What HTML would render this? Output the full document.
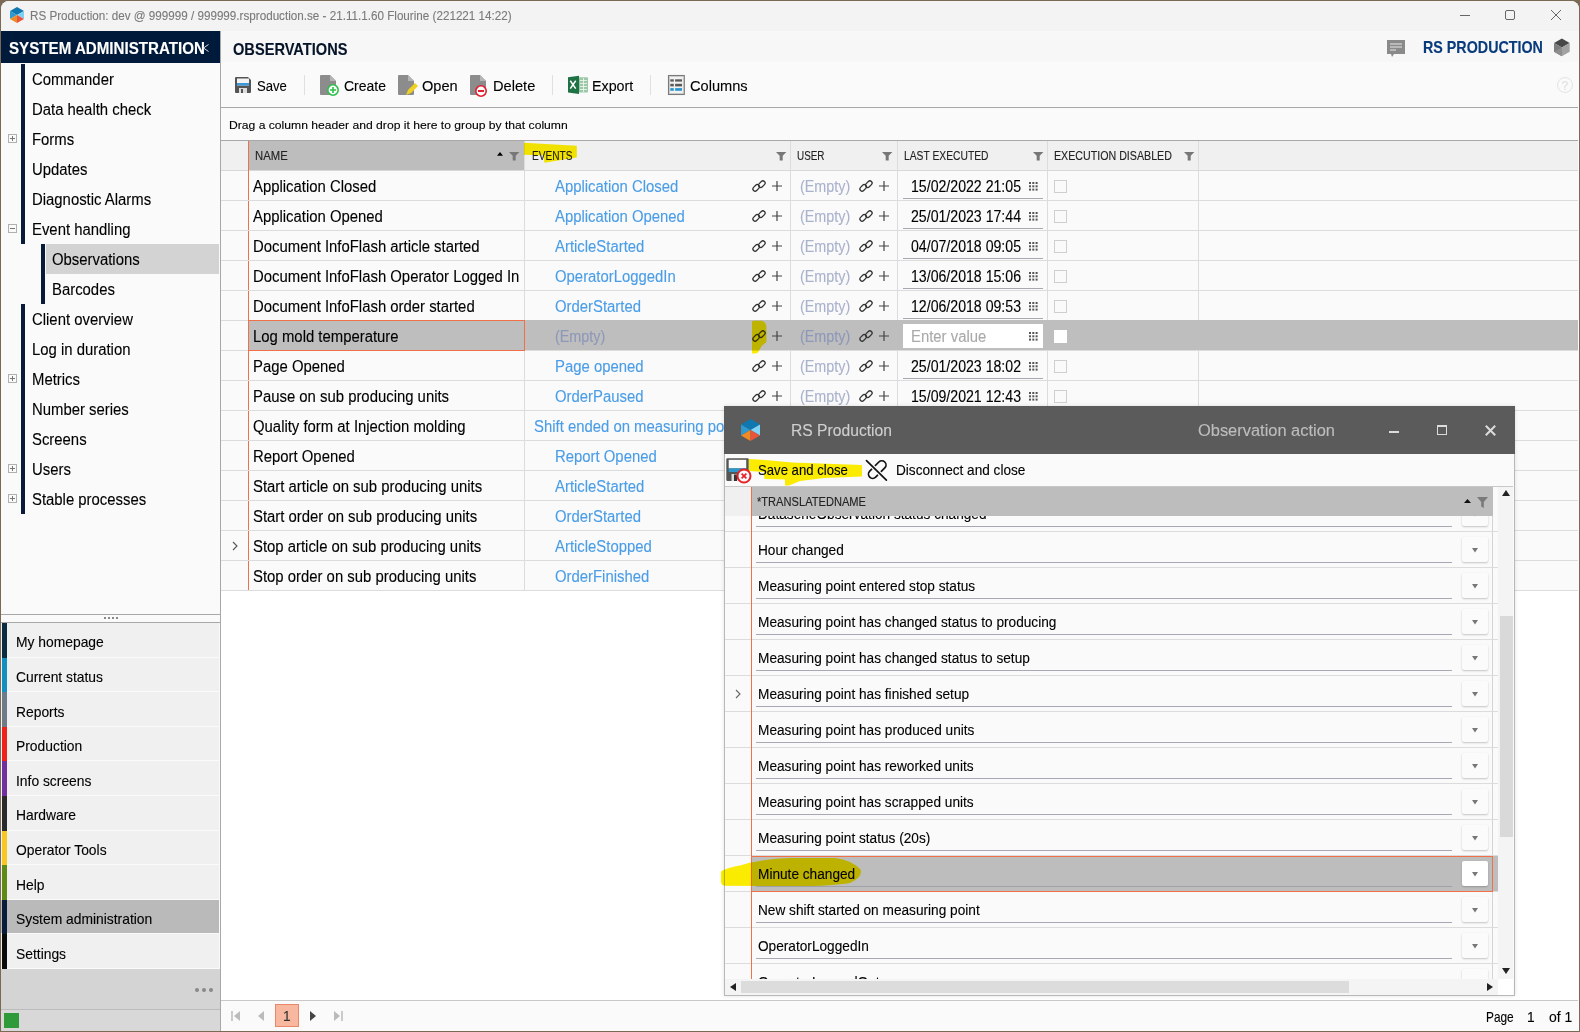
<!DOCTYPE html><html><head><meta charset="utf-8"><style>
*{margin:0;padding:0;box-sizing:border-box}
html,body{width:1580px;height:1032px;overflow:hidden;background:#7a6a55;font-family:"Liberation Sans",sans-serif;color:#111}
.a{position:absolute}
.t{position:absolute;white-space:nowrap;line-height:0;transform-origin:0 0;-webkit-text-stroke:0.12px currentColor}
svg{position:absolute;overflow:visible}
</style></head><body>

<div class="a" style="left:1px;top:1px;width:1578px;height:1030px;background:#fafafa;border-radius:8px 8px 0 0;overflow:hidden">
<div class="a" style="left:-1px;top:-1px;width:1580px;height:1032px">
<div class="a" style="left:0;top:0;width:1580px;height:31px;background:#f3f3f3"></div>
<svg style="left:10px;top:7px" width="14" height="16" viewBox="0 0 14 16">
<polygon points="7,0 14,4 7,8 0,4" fill="#0f78b0"/><polygon points="0,4 7,8 0,12" fill="#2e9ad0"/><polygon points="14,4 7,8 14,12" fill="#7fd0f5"/>
<polygon points="0,12 7,8 7,16" fill="#f08a25"/><polygon points="14,12 7,8 7,16" fill="#e8553a"/></svg>
<div class="t" style="left:30.40px;top:15.96px;font-size:12.8px;color:#7a7a7a;transform:scaleX(0.9113);">RS Production: dev @ 999999 / 999999.rsproduction.se - 21.11.1.60 Flourine (221221 14:22)</div>
<div class="a" style="left:1460px;top:15px;width:10px;height:1px;background:#666"></div>
<div class="a" style="left:1505px;top:10px;width:10px;height:10px;border:1px solid #666;border-radius:2px"></div>
<svg style="left:1551px;top:10px" width="10" height="10"><path d="M0 0L10 10M10 0L0 10" stroke="#666" stroke-width="1"/></svg>
<div class="a" style="left:1px;top:31px;width:220px;height:31.5px;background:#001a3b"></div>
<div class="t" style="left:8.50px;top:48.99px;font-size:15.6px;color:#fff;font-weight:bold;transform:scaleX(0.9706);">SYSTEM ADMINISTRATION</div>
<svg style="left:203px;top:44px" width="6" height="8" viewBox="0 0 6 8"><path d="M0.5 4L5.5 0.5M0.5 4L5.5 7.5" stroke="#ddd" stroke-width="1"/></svg>
<div class="a" style="left:220px;top:31px;width:1px;height:1001px;background:#a8a8a8"></div>
<div class="a" style="left:21px;top:64px;width:4px;height:180px;background:#0a1a3a"></div>
<div class="a" style="left:41px;top:244px;width:4px;height:60px;background:#0a1a3a"></div>
<div class="a" style="left:21px;top:304px;width:4px;height:210px;background:#0a1a3a"></div>
<div class="a" style="left:46px;top:244px;width:173px;height:30px;background:#d3d3d3"></div>
<div class="t" style="left:32.20px;top:79.96px;font-size:16px;color:#000;transform:scaleX(0.9300);">Commander</div>
<div class="t" style="left:32.20px;top:109.96px;font-size:16px;color:#000;transform:scaleX(0.9300);">Data health check</div>
<div class="t" style="left:32.20px;top:139.96px;font-size:16px;color:#000;transform:scaleX(0.9300);">Forms</div>
<div class="a" style="left:8px;top:134px;width:9px;height:9px;border:1px solid #b0b0b0;background:#fafafa"></div>
<div class="a" style="left:10px;top:138px;width:5px;height:1px;background:#777"></div>
<div class="a" style="left:12px;top:136px;width:1px;height:5px;background:#777"></div>
<div class="t" style="left:32.20px;top:169.96px;font-size:16px;color:#000;transform:scaleX(0.9300);">Updates</div>
<div class="t" style="left:32.20px;top:199.96px;font-size:16px;color:#000;transform:scaleX(0.9300);">Diagnostic Alarms</div>
<div class="t" style="left:32.20px;top:229.96px;font-size:16px;color:#000;transform:scaleX(0.9300);">Event handling</div>
<div class="a" style="left:8px;top:224px;width:9px;height:9px;border:1px solid #b0b0b0;background:#fafafa"></div>
<div class="a" style="left:10px;top:228px;width:5px;height:1px;background:#777"></div>
<div class="t" style="left:52.20px;top:259.96px;font-size:16px;color:#000;transform:scaleX(0.9300);">Observations</div>
<div class="t" style="left:52.20px;top:289.96px;font-size:16px;color:#000;transform:scaleX(0.9300);">Barcodes</div>
<div class="t" style="left:32.20px;top:319.96px;font-size:16px;color:#000;transform:scaleX(0.9300);">Client overview</div>
<div class="t" style="left:32.20px;top:349.96px;font-size:16px;color:#000;transform:scaleX(0.9300);">Log in duration</div>
<div class="t" style="left:32.20px;top:379.96px;font-size:16px;color:#000;transform:scaleX(0.9300);">Metrics</div>
<div class="a" style="left:8px;top:374px;width:9px;height:9px;border:1px solid #b0b0b0;background:#fafafa"></div>
<div class="a" style="left:10px;top:378px;width:5px;height:1px;background:#777"></div>
<div class="a" style="left:12px;top:376px;width:1px;height:5px;background:#777"></div>
<div class="t" style="left:32.20px;top:409.96px;font-size:16px;color:#000;transform:scaleX(0.9300);">Number series</div>
<div class="t" style="left:32.20px;top:439.96px;font-size:16px;color:#000;transform:scaleX(0.9300);">Screens</div>
<div class="t" style="left:32.20px;top:469.96px;font-size:16px;color:#000;transform:scaleX(0.9300);">Users</div>
<div class="a" style="left:8px;top:464px;width:9px;height:9px;border:1px solid #b0b0b0;background:#fafafa"></div>
<div class="a" style="left:10px;top:468px;width:5px;height:1px;background:#777"></div>
<div class="a" style="left:12px;top:466px;width:1px;height:5px;background:#777"></div>
<div class="t" style="left:32.20px;top:499.96px;font-size:16px;color:#000;transform:scaleX(0.9300);">Stable processes</div>
<div class="a" style="left:8px;top:494px;width:9px;height:9px;border:1px solid #b0b0b0;background:#fafafa"></div>
<div class="a" style="left:10px;top:498px;width:5px;height:1px;background:#777"></div>
<div class="a" style="left:12px;top:496px;width:1px;height:5px;background:#777"></div>
<div class="a" style="left:1px;top:614px;width:219px;height:1px;background:#a8a8a8"></div>
<div class="a" style="left:1px;top:622px;width:219px;height:1px;background:#a8a8a8"></div>
<div class="a" style="left:104px;top:617px;width:2px;height:2px;background:#888"></div>
<div class="a" style="left:108px;top:617px;width:2px;height:2px;background:#888"></div>
<div class="a" style="left:112px;top:617px;width:2px;height:2px;background:#888"></div>
<div class="a" style="left:116px;top:617px;width:2px;height:2px;background:#888"></div>
<div class="a" style="left:1px;top:623.0px;width:218px;height:34.6px;background:#f0f0f0;border-bottom:1px solid #fafafa"></div>
<div class="a" style="left:2px;top:623.0px;width:5px;height:34.6px;background:#0b2d40"></div>
<div class="t" style="left:16.30px;top:642.48px;font-size:14.5px;color:#000;transform:scaleX(0.9550);">My homepage</div>
<div class="a" style="left:1px;top:657.6px;width:218px;height:34.6px;background:#f0f0f0;border-bottom:1px solid #fafafa"></div>
<div class="a" style="left:2px;top:657.6px;width:5px;height:34.6px;background:#138ec0"></div>
<div class="t" style="left:16.30px;top:677.08px;font-size:14.5px;color:#000;transform:scaleX(0.9550);">Current status</div>
<div class="a" style="left:1px;top:692.2px;width:218px;height:34.6px;background:#f0f0f0;border-bottom:1px solid #fafafa"></div>
<div class="a" style="left:2px;top:692.2px;width:5px;height:34.6px;background:#6e7c8a"></div>
<div class="t" style="left:16.30px;top:711.68px;font-size:14.5px;color:#000;transform:scaleX(0.9550);">Reports</div>
<div class="a" style="left:1px;top:726.8px;width:218px;height:34.6px;background:#f0f0f0;border-bottom:1px solid #fafafa"></div>
<div class="a" style="left:2px;top:726.8px;width:5px;height:34.6px;background:#f0201a"></div>
<div class="t" style="left:16.30px;top:746.28px;font-size:14.5px;color:#000;transform:scaleX(0.9550);">Production</div>
<div class="a" style="left:1px;top:761.4px;width:218px;height:34.6px;background:#f0f0f0;border-bottom:1px solid #fafafa"></div>
<div class="a" style="left:2px;top:761.4px;width:5px;height:34.6px;background:#7030a0"></div>
<div class="t" style="left:16.30px;top:780.88px;font-size:14.5px;color:#000;transform:scaleX(0.9550);">Info screens</div>
<div class="a" style="left:1px;top:796.0px;width:218px;height:34.6px;background:#f0f0f0;border-bottom:1px solid #fafafa"></div>
<div class="a" style="left:2px;top:796.0px;width:5px;height:34.6px;background:#2a2a2a"></div>
<div class="t" style="left:16.30px;top:815.48px;font-size:14.5px;color:#000;transform:scaleX(0.9550);">Hardware</div>
<div class="a" style="left:1px;top:830.6px;width:218px;height:34.6px;background:#f0f0f0;border-bottom:1px solid #fafafa"></div>
<div class="a" style="left:2px;top:830.6px;width:5px;height:34.6px;background:#f8c820"></div>
<div class="t" style="left:16.30px;top:850.08px;font-size:14.5px;color:#000;transform:scaleX(0.9550);">Operator Tools</div>
<div class="a" style="left:1px;top:865.2px;width:218px;height:34.6px;background:#f0f0f0;border-bottom:1px solid #fafafa"></div>
<div class="a" style="left:2px;top:865.2px;width:5px;height:34.6px;background:#5f8a18"></div>
<div class="t" style="left:16.30px;top:884.68px;font-size:14.5px;color:#000;transform:scaleX(0.9550);">Help</div>
<div class="a" style="left:1px;top:899.8px;width:218px;height:34.6px;background:#bababa;border-bottom:1px solid #fafafa"></div>
<div class="a" style="left:2px;top:899.8px;width:5px;height:34.6px;background:#0a1a3a"></div>
<div class="t" style="left:16.30px;top:919.28px;font-size:14.5px;color:#000;transform:scaleX(0.9550);">System administration</div>
<div class="a" style="left:1px;top:934.4px;width:218px;height:34.6px;background:#f0f0f0;border-bottom:1px solid #fafafa"></div>
<div class="a" style="left:2px;top:934.4px;width:5px;height:34.6px;background:#0a0a0a"></div>
<div class="t" style="left:16.30px;top:953.88px;font-size:14.5px;color:#000;transform:scaleX(0.9550);">Settings</div>
<div class="a" style="left:1px;top:969px;width:219px;height:41px;background:#d4d4d4"></div>
<div class="a" style="left:195px;top:988px;width:4px;height:4px;border-radius:2px;background:#888"></div>
<div class="a" style="left:202px;top:988px;width:4px;height:4px;border-radius:2px;background:#888"></div>
<div class="a" style="left:209px;top:988px;width:4px;height:4px;border-radius:2px;background:#888"></div>
<div class="a" style="left:1px;top:1009px;width:219px;height:1px;background:#bbb"></div>
<div class="a" style="left:1px;top:1010px;width:219px;height:22px;background:#d8d8d8"></div>
<div class="a" style="left:4px;top:1013px;width:15px;height:15px;background:#2e9a3a"></div>
<div class="a" style="left:221px;top:31px;width:1357px;height:31px;background:#f7f7f7"></div>
<div class="t" style="left:232.50px;top:48.82px;font-size:16.1px;color:#061428;font-weight:bold;transform:scaleX(0.9077);">OBSERVATIONS</div>
<div class="t" style="left:1423.10px;top:47.99px;font-size:15.9px;color:#083a7c;font-weight:bold;transform:scaleX(0.8996);">RS PRODUCTION</div>
<svg style="left:1387px;top:40px" width="18" height="18" viewBox="0 0 18 18">
<path d="M0 0H18V14H7L5 17L4 14H0Z" fill="#8a8a8a"/><path d="M3 4H15M3 7H15M3 10H9" stroke="#e8e8e8" stroke-width="1.2"/></svg>
<svg style="left:1550px;top:35px" width="25" height="25" viewBox="1550 35 25 25">
<polygon points="1561.85,38.5 1569.7,42.95 1561.85,47.4 1554,42.95" fill="#484848"/><polygon points="1554,42.95 1561.85,47.4 1561.85,56.3 1554,51.85" fill="#7c7c7c"/><polygon points="1569.7,42.95 1561.85,47.4 1561.85,56.3 1569.7,51.85" fill="#a2a2a2"/>
<polygon points="1554,51.85 1561.85,47.4 1561.85,56.3" fill="#8e8e8e"/></svg>
<div class="a" style="left:1557px;top:77px;width:16px;height:16px;border:1px solid #e4e4e4;border-radius:50%"></div>
<div class="t" style="left:1561.50px;top:85.84px;font-size:12px;color:#e0e0e0;transform:scaleX(1.0000);">?</div>
<svg style="left:235px;top:77px" width="16" height="16" viewBox="0 0 16 16">
<path d="M1 0H13L16 3V15Q16 16 15 16H1Q0 16 0 15V1Q0 0 1 0Z" fill="#555"/><rect x="2" y="1.5" width="12" height="7" fill="#f4f4f4"/><rect x="2" y="6" width="12" height="2.5" fill="#3a9ad8"/><rect x="4" y="11" width="8" height="5" fill="#ddd"/><rect x="6" y="12" width="2" height="4" fill="#555"/></svg>
<div class="t" style="left:257.40px;top:85.96px;font-size:15.4px;color:#000;transform:scaleX(0.8518);">Save</div>
<div class="a" style="left:304px;top:75px;width:1px;height:20px;background:#e0e0e0"></div>
<svg style="left:320px;top:75px" width="17" height="20" viewBox="0 0 17 20"><path d="M1 0H10L16 6V19Q16 20 15 20H1Q0 20 0 19V1Q0 0 1 0Z" fill="#8c8c8c"/><path d="M10 0V6H16" fill="#b5b5b5"/></svg>
<svg style="left:327px;top:84px" width="12" height="12" viewBox="0 0 12 12"><circle cx="6" cy="6" r="5.2" fill="#fff" stroke="#2ec04a" stroke-width="1.6"/><path d="M6 3V9M3 6H9" stroke="#2ec04a" stroke-width="1.6"/></svg>
<div class="t" style="left:344.00px;top:85.96px;font-size:15.4px;color:#000;transform:scaleX(0.9086);">Create</div>
<svg style="left:398px;top:75px" width="17" height="20" viewBox="0 0 17 20"><path d="M1 0H10L16 6V19Q16 20 15 20H1Q0 20 0 19V1Q0 0 1 0Z" fill="#8c8c8c"/><path d="M10 0V6H16" fill="#b5b5b5"/></svg>
<svg style="left:405px;top:82px" width="14" height="13" viewBox="0 0 14 13"><path d="M1 13L3 8L10 1L13 4L6 11Z" fill="#f0d020"/></svg>
<div class="t" style="left:421.80px;top:85.96px;font-size:15.4px;color:#000;transform:scaleX(0.9476);">Open</div>
<svg style="left:470px;top:75px" width="17" height="20" viewBox="0 0 17 20"><path d="M1 0H10L16 6V19Q16 20 15 20H1Q0 20 0 19V1Q0 0 1 0Z" fill="#8c8c8c"/><path d="M10 0V6H16" fill="#b5b5b5"/></svg>
<svg style="left:475px;top:85px" width="12" height="12" viewBox="0 0 12 12"><circle cx="6" cy="6" r="5.2" fill="#fff" stroke="#e02030" stroke-width="1.6"/><path d="M3 6H9" stroke="#e02030" stroke-width="1.8"/></svg>
<div class="t" style="left:493.20px;top:85.96px;font-size:15.4px;color:#000;transform:scaleX(0.9502);">Delete</div>
<div class="a" style="left:552px;top:75px;width:1px;height:20px;background:#e0e0e0"></div>
<svg style="left:560px;top:70px" width="30" height="30" viewBox="560 70 30 30">
<rect x="578" y="77.3" width="10" height="15.2" rx="1" fill="#9cc8a8"/><path d="M580 80.5H587M580 83.5H587M580 86.5H587M580 89.5H587M583.5 78V92" stroke="#e9f4ec" stroke-width="0.9"/>
<path d="M568 77.3L579 75.8V93.9L568 92.4Z" fill="#1f7244"/><path d="M570.3 80.8L575.7 88.6M575.7 80.8L570.3 88.6" stroke="#fff" stroke-width="1.5"/></svg>
<div class="t" style="left:592.30px;top:85.96px;font-size:15.4px;color:#000;transform:scaleX(0.9279);">Export</div>
<div class="a" style="left:650px;top:75px;width:1px;height:20px;background:#e0e0e0"></div>
<svg style="left:660px;top:70px" width="30" height="30" viewBox="660 70 30 30">
<rect x="668.6" y="75.6" width="15.6" height="18.8" fill="#f2f2f2" stroke="#7a7a7a" stroke-width="1.3"/><rect x="669.6" y="76.6" width="13.6" height="16.8" fill="none" stroke="#c8c8c8" stroke-width="0.7"/>
<rect x="670.3" y="79.3" width="3.5" height="2.3" fill="#5a5a5a"/><rect x="675.1" y="79.3" width="6.9" height="2.3" fill="#5a5a5a"/>
<rect x="670.3" y="83.8" width="3.5" height="2.6" fill="#5a5a5a"/><rect x="675.1" y="83.8" width="6.9" height="2.6" fill="#5a5a5a"/>
<rect x="670.3" y="88.1" width="3.5" height="2.7" fill="#2a96d0"/><rect x="675.1" y="88.1" width="6.9" height="2.7" fill="#2a96d0"/></svg>
<div class="t" style="left:690.20px;top:85.96px;font-size:15.4px;color:#000;transform:scaleX(0.9495);">Columns</div>
<div class="a" style="left:221px;top:107px;width:1357px;height:1px;background:#a8a8a8"></div>
<div class="t" style="left:228.50px;top:125.01px;font-size:11.8px;color:#000;transform:scaleX(1.0289);">Drag a column header and drop it here to group by that column</div>
<div class="a" style="left:221px;top:140px;width:1357px;height:1px;background:#a8a8a8"></div>
<div class="a" style="left:221px;top:141px;width:1357px;height:29px;background:#f0f0f0"></div>
<div class="a" style="left:249px;top:141px;width:275px;height:29px;background:#bdbdbd"></div>
<div class="a" style="left:221px;top:170px;width:1357px;height:1px;background:#d8d8d8"></div>
<div class="a" style="left:524px;top:141px;width:1px;height:450px;background:#dcdcdc"></div>
<div class="a" style="left:790px;top:141px;width:1px;height:450px;background:#dcdcdc"></div>
<div class="a" style="left:897px;top:141px;width:1px;height:450px;background:#dcdcdc"></div>
<div class="a" style="left:1047px;top:141px;width:1px;height:450px;background:#dcdcdc"></div>
<div class="a" style="left:1198px;top:141px;width:1px;height:450px;background:#dcdcdc"></div>
<div class="a" style="left:248px;top:141px;width:1px;height:450px;background:#f07048"></div>
<div class="t" style="left:254.60px;top:156.23px;font-size:12.9px;color:#222;transform:scaleX(0.8773);">NAME</div>
<div class="t" style="left:531.60px;top:156.23px;font-size:12.9px;color:#222;transform:scaleX(0.7847);">EVENTS</div>
<div class="t" style="left:797.30px;top:156.23px;font-size:12.9px;color:#222;transform:scaleX(0.7673);">USER</div>
<div class="t" style="left:904.40px;top:156.23px;font-size:12.9px;color:#222;transform:scaleX(0.7991);">LAST EXECUTED</div>
<div class="t" style="left:1054.00px;top:156.23px;font-size:12.9px;color:#222;transform:scaleX(0.8272);">EXECUTION DISABLED</div>
<svg style="left:509.3px;top:152.2px" width="11" height="9" viewBox="0 0 11 9"><path d="M0 0H10.4L6.7 3.8V8.5H3.7V3.8Z" fill="#777"/></svg>
<svg style="left:775.5px;top:152.2px" width="11" height="9" viewBox="0 0 11 9"><path d="M0 0H10.4L6.7 3.8V8.5H3.7V3.8Z" fill="#777"/></svg>
<svg style="left:882.4px;top:152.2px" width="11" height="9" viewBox="0 0 11 9"><path d="M0 0H10.4L6.7 3.8V8.5H3.7V3.8Z" fill="#777"/></svg>
<svg style="left:1032.5px;top:152.2px" width="11" height="9" viewBox="0 0 11 9"><path d="M0 0H10.4L6.7 3.8V8.5H3.7V3.8Z" fill="#777"/></svg>
<svg style="left:1183.5px;top:152.2px" width="11" height="9" viewBox="0 0 11 9"><path d="M0 0H10.4L6.7 3.8V8.5H3.7V3.8Z" fill="#777"/></svg>
<svg style="left:497px;top:152.2px" width="6" height="4" viewBox="0 0 6 4"><path d="M0 3.8L3 0L6 3.8Z" fill="#000"/></svg>
<div class="a" style="left:221px;top:591px;width:1357px;height:409px;background:#fff"></div>
<div class="a" style="left:221px;top:200px;width:1357px;height:1px;background:#dcdcdc"></div>
<div class="t" style="left:253.30px;top:186.96px;font-size:16px;color:#000;transform:scaleX(0.9300);">Application Closed</div>
<div class="t" style="left:555.00px;top:186.96px;font-size:16px;color:#4a9de6;transform:scaleX(0.9300);">Application Closed</div>
<svg style="left:750.3px;top:177.0px" width="18" height="18" viewBox="-9 -9 18 18"><g transform="rotate(-45)" fill="none" stroke="#333" stroke-width="1.25"><rect x="-7.0" y="-2.9" width="7.4" height="4.4" rx="2.2"/><rect x="-0.4" y="-1.5" width="7.4" height="4.4" rx="2.2"/></g></svg>
<svg style="left:772px;top:181px" width="10" height="10" viewBox="0 0 10 10"><path d="M5 0V10M0 5H10" stroke="#444" stroke-width="1.2"/></svg>
<div class="t" style="left:800.30px;top:186.96px;font-size:16px;color:#aab2cc;transform:scaleX(0.8960);">(Empty)</div>
<svg style="left:857.3px;top:177.0px" width="18" height="18" viewBox="-9 -9 18 18"><g transform="rotate(-45)" fill="none" stroke="#333" stroke-width="1.25"><rect x="-7.0" y="-2.9" width="7.4" height="4.4" rx="2.2"/><rect x="-0.4" y="-1.5" width="7.4" height="4.4" rx="2.2"/></g></svg>
<svg style="left:879px;top:181px" width="10" height="10" viewBox="0 0 10 10"><path d="M5 0V10M0 5H10" stroke="#444" stroke-width="1.2"/></svg>
<div class="t" style="left:911.00px;top:186.96px;font-size:16px;color:#000;transform:scaleX(0.8830);">15/02/2022 21:05</div>
<div class="a" style="left:903px;top:198px;width:140px;height:1px;background:#a8a8b0"></div>
<div class="a" style="left:1054px;top:180px;width:13px;height:13px;border:1px solid #cfcfcf;background:#fafafa"></div>
<svg style="left:1029px;top:181.5px" width="9" height="9" viewBox="0 0 9 9"><g fill="#555"><rect x="0.0" y="0.0" width="2" height="2"/><rect x="3.3" y="0.0" width="2" height="2"/><rect x="6.6" y="0.0" width="2" height="2"/><rect x="0.0" y="3.3" width="2" height="2"/><rect x="3.3" y="3.3" width="2" height="2"/><rect x="6.6" y="3.3" width="2" height="2"/><rect x="0.0" y="6.6" width="2" height="2"/><rect x="3.3" y="6.6" width="2" height="2"/><rect x="6.6" y="6.6" width="2" height="2"/></g></svg>
<div class="a" style="left:221px;top:230px;width:1357px;height:1px;background:#dcdcdc"></div>
<div class="t" style="left:253.30px;top:216.96px;font-size:16px;color:#000;transform:scaleX(0.9300);">Application Opened</div>
<div class="t" style="left:555.00px;top:216.96px;font-size:16px;color:#4a9de6;transform:scaleX(0.9300);">Application Opened</div>
<svg style="left:750.3px;top:207.0px" width="18" height="18" viewBox="-9 -9 18 18"><g transform="rotate(-45)" fill="none" stroke="#333" stroke-width="1.25"><rect x="-7.0" y="-2.9" width="7.4" height="4.4" rx="2.2"/><rect x="-0.4" y="-1.5" width="7.4" height="4.4" rx="2.2"/></g></svg>
<svg style="left:772px;top:211px" width="10" height="10" viewBox="0 0 10 10"><path d="M5 0V10M0 5H10" stroke="#444" stroke-width="1.2"/></svg>
<div class="t" style="left:800.30px;top:216.96px;font-size:16px;color:#aab2cc;transform:scaleX(0.8960);">(Empty)</div>
<svg style="left:857.3px;top:207.0px" width="18" height="18" viewBox="-9 -9 18 18"><g transform="rotate(-45)" fill="none" stroke="#333" stroke-width="1.25"><rect x="-7.0" y="-2.9" width="7.4" height="4.4" rx="2.2"/><rect x="-0.4" y="-1.5" width="7.4" height="4.4" rx="2.2"/></g></svg>
<svg style="left:879px;top:211px" width="10" height="10" viewBox="0 0 10 10"><path d="M5 0V10M0 5H10" stroke="#444" stroke-width="1.2"/></svg>
<div class="t" style="left:911.00px;top:216.96px;font-size:16px;color:#000;transform:scaleX(0.8830);">25/01/2023 17:44</div>
<div class="a" style="left:903px;top:228px;width:140px;height:1px;background:#a8a8b0"></div>
<div class="a" style="left:1054px;top:210px;width:13px;height:13px;border:1px solid #cfcfcf;background:#fafafa"></div>
<svg style="left:1029px;top:211.5px" width="9" height="9" viewBox="0 0 9 9"><g fill="#555"><rect x="0.0" y="0.0" width="2" height="2"/><rect x="3.3" y="0.0" width="2" height="2"/><rect x="6.6" y="0.0" width="2" height="2"/><rect x="0.0" y="3.3" width="2" height="2"/><rect x="3.3" y="3.3" width="2" height="2"/><rect x="6.6" y="3.3" width="2" height="2"/><rect x="0.0" y="6.6" width="2" height="2"/><rect x="3.3" y="6.6" width="2" height="2"/><rect x="6.6" y="6.6" width="2" height="2"/></g></svg>
<div class="a" style="left:221px;top:260px;width:1357px;height:1px;background:#dcdcdc"></div>
<div class="t" style="left:253.30px;top:246.96px;font-size:16px;color:#000;transform:scaleX(0.9300);">Document InfoFlash article started</div>
<div class="t" style="left:555.00px;top:246.96px;font-size:16px;color:#4a9de6;transform:scaleX(0.9300);">ArticleStarted</div>
<svg style="left:750.3px;top:237.0px" width="18" height="18" viewBox="-9 -9 18 18"><g transform="rotate(-45)" fill="none" stroke="#333" stroke-width="1.25"><rect x="-7.0" y="-2.9" width="7.4" height="4.4" rx="2.2"/><rect x="-0.4" y="-1.5" width="7.4" height="4.4" rx="2.2"/></g></svg>
<svg style="left:772px;top:241px" width="10" height="10" viewBox="0 0 10 10"><path d="M5 0V10M0 5H10" stroke="#444" stroke-width="1.2"/></svg>
<div class="t" style="left:800.30px;top:246.96px;font-size:16px;color:#aab2cc;transform:scaleX(0.8960);">(Empty)</div>
<svg style="left:857.3px;top:237.0px" width="18" height="18" viewBox="-9 -9 18 18"><g transform="rotate(-45)" fill="none" stroke="#333" stroke-width="1.25"><rect x="-7.0" y="-2.9" width="7.4" height="4.4" rx="2.2"/><rect x="-0.4" y="-1.5" width="7.4" height="4.4" rx="2.2"/></g></svg>
<svg style="left:879px;top:241px" width="10" height="10" viewBox="0 0 10 10"><path d="M5 0V10M0 5H10" stroke="#444" stroke-width="1.2"/></svg>
<div class="t" style="left:911.00px;top:246.96px;font-size:16px;color:#000;transform:scaleX(0.8830);">04/07/2018 09:05</div>
<div class="a" style="left:903px;top:258px;width:140px;height:1px;background:#a8a8b0"></div>
<div class="a" style="left:1054px;top:240px;width:13px;height:13px;border:1px solid #cfcfcf;background:#fafafa"></div>
<svg style="left:1029px;top:241.5px" width="9" height="9" viewBox="0 0 9 9"><g fill="#555"><rect x="0.0" y="0.0" width="2" height="2"/><rect x="3.3" y="0.0" width="2" height="2"/><rect x="6.6" y="0.0" width="2" height="2"/><rect x="0.0" y="3.3" width="2" height="2"/><rect x="3.3" y="3.3" width="2" height="2"/><rect x="6.6" y="3.3" width="2" height="2"/><rect x="0.0" y="6.6" width="2" height="2"/><rect x="3.3" y="6.6" width="2" height="2"/><rect x="6.6" y="6.6" width="2" height="2"/></g></svg>
<div class="a" style="left:221px;top:290px;width:1357px;height:1px;background:#dcdcdc"></div>
<div class="t" style="left:253.30px;top:276.96px;font-size:16px;color:#000;transform:scaleX(0.9300);">Document InfoFlash Operator Logged In</div>
<div class="t" style="left:555.00px;top:276.96px;font-size:16px;color:#4a9de6;transform:scaleX(0.9300);">OperatorLoggedIn</div>
<svg style="left:750.3px;top:267.0px" width="18" height="18" viewBox="-9 -9 18 18"><g transform="rotate(-45)" fill="none" stroke="#333" stroke-width="1.25"><rect x="-7.0" y="-2.9" width="7.4" height="4.4" rx="2.2"/><rect x="-0.4" y="-1.5" width="7.4" height="4.4" rx="2.2"/></g></svg>
<svg style="left:772px;top:271px" width="10" height="10" viewBox="0 0 10 10"><path d="M5 0V10M0 5H10" stroke="#444" stroke-width="1.2"/></svg>
<div class="t" style="left:800.30px;top:276.96px;font-size:16px;color:#aab2cc;transform:scaleX(0.8960);">(Empty)</div>
<svg style="left:857.3px;top:267.0px" width="18" height="18" viewBox="-9 -9 18 18"><g transform="rotate(-45)" fill="none" stroke="#333" stroke-width="1.25"><rect x="-7.0" y="-2.9" width="7.4" height="4.4" rx="2.2"/><rect x="-0.4" y="-1.5" width="7.4" height="4.4" rx="2.2"/></g></svg>
<svg style="left:879px;top:271px" width="10" height="10" viewBox="0 0 10 10"><path d="M5 0V10M0 5H10" stroke="#444" stroke-width="1.2"/></svg>
<div class="t" style="left:911.00px;top:276.96px;font-size:16px;color:#000;transform:scaleX(0.8830);">13/06/2018 15:06</div>
<div class="a" style="left:903px;top:288px;width:140px;height:1px;background:#a8a8b0"></div>
<div class="a" style="left:1054px;top:270px;width:13px;height:13px;border:1px solid #cfcfcf;background:#fafafa"></div>
<svg style="left:1029px;top:271.5px" width="9" height="9" viewBox="0 0 9 9"><g fill="#555"><rect x="0.0" y="0.0" width="2" height="2"/><rect x="3.3" y="0.0" width="2" height="2"/><rect x="6.6" y="0.0" width="2" height="2"/><rect x="0.0" y="3.3" width="2" height="2"/><rect x="3.3" y="3.3" width="2" height="2"/><rect x="6.6" y="3.3" width="2" height="2"/><rect x="0.0" y="6.6" width="2" height="2"/><rect x="3.3" y="6.6" width="2" height="2"/><rect x="6.6" y="6.6" width="2" height="2"/></g></svg>
<div class="a" style="left:221px;top:320px;width:1357px;height:1px;background:#dcdcdc"></div>
<div class="t" style="left:253.30px;top:306.96px;font-size:16px;color:#000;transform:scaleX(0.9300);">Document InfoFlash order started</div>
<div class="t" style="left:555.00px;top:306.96px;font-size:16px;color:#4a9de6;transform:scaleX(0.9300);">OrderStarted</div>
<svg style="left:750.3px;top:297.0px" width="18" height="18" viewBox="-9 -9 18 18"><g transform="rotate(-45)" fill="none" stroke="#333" stroke-width="1.25"><rect x="-7.0" y="-2.9" width="7.4" height="4.4" rx="2.2"/><rect x="-0.4" y="-1.5" width="7.4" height="4.4" rx="2.2"/></g></svg>
<svg style="left:772px;top:301px" width="10" height="10" viewBox="0 0 10 10"><path d="M5 0V10M0 5H10" stroke="#444" stroke-width="1.2"/></svg>
<div class="t" style="left:800.30px;top:306.96px;font-size:16px;color:#aab2cc;transform:scaleX(0.8960);">(Empty)</div>
<svg style="left:857.3px;top:297.0px" width="18" height="18" viewBox="-9 -9 18 18"><g transform="rotate(-45)" fill="none" stroke="#333" stroke-width="1.25"><rect x="-7.0" y="-2.9" width="7.4" height="4.4" rx="2.2"/><rect x="-0.4" y="-1.5" width="7.4" height="4.4" rx="2.2"/></g></svg>
<svg style="left:879px;top:301px" width="10" height="10" viewBox="0 0 10 10"><path d="M5 0V10M0 5H10" stroke="#444" stroke-width="1.2"/></svg>
<div class="t" style="left:911.00px;top:306.96px;font-size:16px;color:#000;transform:scaleX(0.8830);">12/06/2018 09:53</div>
<div class="a" style="left:903px;top:318px;width:140px;height:1px;background:#a8a8b0"></div>
<div class="a" style="left:1054px;top:300px;width:13px;height:13px;border:1px solid #cfcfcf;background:#fafafa"></div>
<svg style="left:1029px;top:301.5px" width="9" height="9" viewBox="0 0 9 9"><g fill="#555"><rect x="0.0" y="0.0" width="2" height="2"/><rect x="3.3" y="0.0" width="2" height="2"/><rect x="6.6" y="0.0" width="2" height="2"/><rect x="0.0" y="3.3" width="2" height="2"/><rect x="3.3" y="3.3" width="2" height="2"/><rect x="6.6" y="3.3" width="2" height="2"/><rect x="0.0" y="6.6" width="2" height="2"/><rect x="3.3" y="6.6" width="2" height="2"/><rect x="6.6" y="6.6" width="2" height="2"/></g></svg>
<div class="a" style="left:249px;top:320px;width:1329px;height:30px;background:#bebebe"></div>
<div class="a" style="left:221px;top:350px;width:1357px;height:1px;background:#dcdcdc"></div>
<div class="t" style="left:253.30px;top:336.96px;font-size:16px;color:#000;transform:scaleX(0.9300);">Log mold temperature</div>
<div class="t" style="left:555.00px;top:336.96px;font-size:16px;color:#8e98b8;transform:scaleX(0.8960);">(Empty)</div>
<svg style="left:750.3px;top:327.0px" width="18" height="18" viewBox="-9 -9 18 18"><g transform="rotate(-45)" fill="none" stroke="#333" stroke-width="1.25"><rect x="-7.0" y="-2.9" width="7.4" height="4.4" rx="2.2"/><rect x="-0.4" y="-1.5" width="7.4" height="4.4" rx="2.2"/></g></svg>
<svg style="left:772px;top:331px" width="10" height="10" viewBox="0 0 10 10"><path d="M5 0V10M0 5H10" stroke="#444" stroke-width="1.2"/></svg>
<div class="t" style="left:800.30px;top:336.96px;font-size:16px;color:#8e98b8;transform:scaleX(0.8960);">(Empty)</div>
<svg style="left:857.3px;top:327.0px" width="18" height="18" viewBox="-9 -9 18 18"><g transform="rotate(-45)" fill="none" stroke="#333" stroke-width="1.25"><rect x="-7.0" y="-2.9" width="7.4" height="4.4" rx="2.2"/><rect x="-0.4" y="-1.5" width="7.4" height="4.4" rx="2.2"/></g></svg>
<svg style="left:879px;top:331px" width="10" height="10" viewBox="0 0 10 10"><path d="M5 0V10M0 5H10" stroke="#444" stroke-width="1.2"/></svg>
<div class="a" style="left:903px;top:324px;width:140px;height:24px;background:#fff"></div>
<div class="t" style="left:911.00px;top:336.96px;font-size:16px;color:#aaa;transform:scaleX(0.9300);">Enter value</div>
<div class="a" style="left:1054px;top:330px;width:13px;height:13px;background:#fff"></div>
<svg style="left:1029px;top:331.5px" width="9" height="9" viewBox="0 0 9 9"><g fill="#555"><rect x="0.0" y="0.0" width="2" height="2"/><rect x="3.3" y="0.0" width="2" height="2"/><rect x="6.6" y="0.0" width="2" height="2"/><rect x="0.0" y="3.3" width="2" height="2"/><rect x="3.3" y="3.3" width="2" height="2"/><rect x="6.6" y="3.3" width="2" height="2"/><rect x="0.0" y="6.6" width="2" height="2"/><rect x="3.3" y="6.6" width="2" height="2"/><rect x="6.6" y="6.6" width="2" height="2"/></g></svg>
<div class="a" style="left:221px;top:380px;width:1357px;height:1px;background:#dcdcdc"></div>
<div class="t" style="left:253.30px;top:366.96px;font-size:16px;color:#000;transform:scaleX(0.9300);">Page Opened</div>
<div class="t" style="left:555.00px;top:366.96px;font-size:16px;color:#4a9de6;transform:scaleX(0.9300);">Page opened</div>
<svg style="left:750.3px;top:357.0px" width="18" height="18" viewBox="-9 -9 18 18"><g transform="rotate(-45)" fill="none" stroke="#333" stroke-width="1.25"><rect x="-7.0" y="-2.9" width="7.4" height="4.4" rx="2.2"/><rect x="-0.4" y="-1.5" width="7.4" height="4.4" rx="2.2"/></g></svg>
<svg style="left:772px;top:361px" width="10" height="10" viewBox="0 0 10 10"><path d="M5 0V10M0 5H10" stroke="#444" stroke-width="1.2"/></svg>
<div class="t" style="left:800.30px;top:366.96px;font-size:16px;color:#aab2cc;transform:scaleX(0.8960);">(Empty)</div>
<svg style="left:857.3px;top:357.0px" width="18" height="18" viewBox="-9 -9 18 18"><g transform="rotate(-45)" fill="none" stroke="#333" stroke-width="1.25"><rect x="-7.0" y="-2.9" width="7.4" height="4.4" rx="2.2"/><rect x="-0.4" y="-1.5" width="7.4" height="4.4" rx="2.2"/></g></svg>
<svg style="left:879px;top:361px" width="10" height="10" viewBox="0 0 10 10"><path d="M5 0V10M0 5H10" stroke="#444" stroke-width="1.2"/></svg>
<div class="t" style="left:911.00px;top:366.96px;font-size:16px;color:#000;transform:scaleX(0.8830);">25/01/2023 18:02</div>
<div class="a" style="left:903px;top:378px;width:140px;height:1px;background:#a8a8b0"></div>
<div class="a" style="left:1054px;top:360px;width:13px;height:13px;border:1px solid #cfcfcf;background:#fafafa"></div>
<svg style="left:1029px;top:361.5px" width="9" height="9" viewBox="0 0 9 9"><g fill="#555"><rect x="0.0" y="0.0" width="2" height="2"/><rect x="3.3" y="0.0" width="2" height="2"/><rect x="6.6" y="0.0" width="2" height="2"/><rect x="0.0" y="3.3" width="2" height="2"/><rect x="3.3" y="3.3" width="2" height="2"/><rect x="6.6" y="3.3" width="2" height="2"/><rect x="0.0" y="6.6" width="2" height="2"/><rect x="3.3" y="6.6" width="2" height="2"/><rect x="6.6" y="6.6" width="2" height="2"/></g></svg>
<div class="a" style="left:221px;top:410px;width:1357px;height:1px;background:#dcdcdc"></div>
<div class="t" style="left:253.30px;top:396.96px;font-size:16px;color:#000;transform:scaleX(0.9300);">Pause on sub producing units</div>
<div class="t" style="left:555.00px;top:396.96px;font-size:16px;color:#4a9de6;transform:scaleX(0.9300);">OrderPaused</div>
<svg style="left:750.3px;top:387.0px" width="18" height="18" viewBox="-9 -9 18 18"><g transform="rotate(-45)" fill="none" stroke="#333" stroke-width="1.25"><rect x="-7.0" y="-2.9" width="7.4" height="4.4" rx="2.2"/><rect x="-0.4" y="-1.5" width="7.4" height="4.4" rx="2.2"/></g></svg>
<svg style="left:772px;top:391px" width="10" height="10" viewBox="0 0 10 10"><path d="M5 0V10M0 5H10" stroke="#444" stroke-width="1.2"/></svg>
<div class="t" style="left:800.30px;top:396.96px;font-size:16px;color:#aab2cc;transform:scaleX(0.8960);">(Empty)</div>
<svg style="left:857.3px;top:387.0px" width="18" height="18" viewBox="-9 -9 18 18"><g transform="rotate(-45)" fill="none" stroke="#333" stroke-width="1.25"><rect x="-7.0" y="-2.9" width="7.4" height="4.4" rx="2.2"/><rect x="-0.4" y="-1.5" width="7.4" height="4.4" rx="2.2"/></g></svg>
<svg style="left:879px;top:391px" width="10" height="10" viewBox="0 0 10 10"><path d="M5 0V10M0 5H10" stroke="#444" stroke-width="1.2"/></svg>
<div class="t" style="left:911.00px;top:396.96px;font-size:16px;color:#000;transform:scaleX(0.8830);">15/09/2021 12:43</div>
<div class="a" style="left:903px;top:408px;width:140px;height:1px;background:#a8a8b0"></div>
<div class="a" style="left:1054px;top:390px;width:13px;height:13px;border:1px solid #cfcfcf;background:#fafafa"></div>
<svg style="left:1029px;top:391.5px" width="9" height="9" viewBox="0 0 9 9"><g fill="#555"><rect x="0.0" y="0.0" width="2" height="2"/><rect x="3.3" y="0.0" width="2" height="2"/><rect x="6.6" y="0.0" width="2" height="2"/><rect x="0.0" y="3.3" width="2" height="2"/><rect x="3.3" y="3.3" width="2" height="2"/><rect x="6.6" y="3.3" width="2" height="2"/><rect x="0.0" y="6.6" width="2" height="2"/><rect x="3.3" y="6.6" width="2" height="2"/><rect x="6.6" y="6.6" width="2" height="2"/></g></svg>
<div class="a" style="left:221px;top:440px;width:1357px;height:1px;background:#dcdcdc"></div>
<div class="t" style="left:253.30px;top:426.96px;font-size:16px;color:#000;transform:scaleX(0.9300);">Quality form at Injection molding</div>
<div class="t" style="left:534.00px;top:426.96px;font-size:16px;color:#4a9de6;transform:scaleX(0.9300);">Shift ended on measuring point status</div>
<svg style="left:750.3px;top:417.0px" width="18" height="18" viewBox="-9 -9 18 18"><g transform="rotate(-45)" fill="none" stroke="#333" stroke-width="1.25"><rect x="-7.0" y="-2.9" width="7.4" height="4.4" rx="2.2"/><rect x="-0.4" y="-1.5" width="7.4" height="4.4" rx="2.2"/></g></svg>
<svg style="left:772px;top:421px" width="10" height="10" viewBox="0 0 10 10"><path d="M5 0V10M0 5H10" stroke="#444" stroke-width="1.2"/></svg>
<div class="t" style="left:800.30px;top:426.96px;font-size:16px;color:#aab2cc;transform:scaleX(0.8960);">(Empty)</div>
<svg style="left:857.3px;top:417.0px" width="18" height="18" viewBox="-9 -9 18 18"><g transform="rotate(-45)" fill="none" stroke="#333" stroke-width="1.25"><rect x="-7.0" y="-2.9" width="7.4" height="4.4" rx="2.2"/><rect x="-0.4" y="-1.5" width="7.4" height="4.4" rx="2.2"/></g></svg>
<svg style="left:879px;top:421px" width="10" height="10" viewBox="0 0 10 10"><path d="M5 0V10M0 5H10" stroke="#444" stroke-width="1.2"/></svg>
<div class="t" style="left:911.00px;top:426.96px;font-size:16px;color:#000;transform:scaleX(0.8830);">x</div>
<div class="a" style="left:903px;top:438px;width:140px;height:1px;background:#a8a8b0"></div>
<div class="a" style="left:1054px;top:420px;width:13px;height:13px;border:1px solid #cfcfcf;background:#fafafa"></div>
<svg style="left:1029px;top:421.5px" width="9" height="9" viewBox="0 0 9 9"><g fill="#555"><rect x="0.0" y="0.0" width="2" height="2"/><rect x="3.3" y="0.0" width="2" height="2"/><rect x="6.6" y="0.0" width="2" height="2"/><rect x="0.0" y="3.3" width="2" height="2"/><rect x="3.3" y="3.3" width="2" height="2"/><rect x="6.6" y="3.3" width="2" height="2"/><rect x="0.0" y="6.6" width="2" height="2"/><rect x="3.3" y="6.6" width="2" height="2"/><rect x="6.6" y="6.6" width="2" height="2"/></g></svg>
<div class="a" style="left:221px;top:470px;width:1357px;height:1px;background:#dcdcdc"></div>
<div class="t" style="left:253.30px;top:456.96px;font-size:16px;color:#000;transform:scaleX(0.9300);">Report Opened</div>
<div class="t" style="left:555.00px;top:456.96px;font-size:16px;color:#4a9de6;transform:scaleX(0.9300);">Report Opened</div>
<div class="a" style="left:221px;top:500px;width:1357px;height:1px;background:#dcdcdc"></div>
<div class="t" style="left:253.30px;top:486.96px;font-size:16px;color:#000;transform:scaleX(0.9300);">Start article on sub producing units</div>
<div class="t" style="left:555.00px;top:486.96px;font-size:16px;color:#4a9de6;transform:scaleX(0.9300);">ArticleStarted</div>
<div class="a" style="left:221px;top:530px;width:1357px;height:1px;background:#dcdcdc"></div>
<div class="t" style="left:253.30px;top:516.96px;font-size:16px;color:#000;transform:scaleX(0.9300);">Start order on sub producing units</div>
<div class="t" style="left:555.00px;top:516.96px;font-size:16px;color:#4a9de6;transform:scaleX(0.9300);">OrderStarted</div>
<div class="a" style="left:221px;top:560px;width:1357px;height:1px;background:#dcdcdc"></div>
<div class="t" style="left:253.30px;top:546.96px;font-size:16px;color:#000;transform:scaleX(0.9300);">Stop article on sub producing units</div>
<div class="t" style="left:555.00px;top:546.96px;font-size:16px;color:#4a9de6;transform:scaleX(0.9300);">ArticleStopped</div>
<svg style="left:232px;top:541px" width="6" height="10" viewBox="0 0 6 10"><path d="M1 1L5 5L1 9" fill="none" stroke="#555" stroke-width="1.1"/></svg>
<div class="a" style="left:221px;top:590px;width:1357px;height:1px;background:#dcdcdc"></div>
<div class="t" style="left:253.30px;top:576.96px;font-size:16px;color:#000;transform:scaleX(0.9300);">Stop order on sub producing units</div>
<div class="t" style="left:555.00px;top:576.96px;font-size:16px;color:#4a9de6;transform:scaleX(0.9300);">OrderFinished</div>
<div class="a" style="left:248px;top:320px;width:277px;height:31px;border:1px solid #f07048"></div>
<div class="a" style="left:221px;top:1000px;width:1357px;height:1px;background:#c8c8c8"></div>
<div class="a" style="left:221px;top:1001px;width:1357px;height:31px;background:#fafafa"></div>
<svg style="left:231px;top:1011px" width="9" height="10" viewBox="0 0 9 10"><path d="M1 0V10" stroke="#bbb" stroke-width="1.5"/><path d="M9 0V10L3 5Z" fill="#bbb"/></svg>
<svg style="left:257px;top:1011px" width="7" height="10" viewBox="0 0 7 10"><path d="M7 0V10L1 5Z" fill="#bbb"/></svg>
<div class="a" style="left:275px;top:1004px;width:24px;height:23px;background:#f8b8a0;border:1px solid #e88868"></div>
<div class="t" style="left:283.00px;top:1016.37px;font-size:14.8px;color:#333;transform:scaleX(0.9300);">1</div>
<svg style="left:310px;top:1011px" width="7" height="10" viewBox="0 0 7 10"><path d="M0 0V10L6 5Z" fill="#444"/></svg>
<svg style="left:334px;top:1011px" width="9" height="10" viewBox="0 0 9 10"><path d="M8 0V10" stroke="#bbb" stroke-width="1.5"/><path d="M0 0V10L6 5Z" fill="#bbb"/></svg>
<div class="t" style="left:1485.90px;top:1016.57px;font-size:14.8px;color:#000;transform:scaleX(0.8014);">Page</div>
<div class="t" style="left:1527.00px;top:1016.57px;font-size:14.8px;color:#000;transform:scaleX(0.9300);">1</div>
<div class="t" style="left:1548.60px;top:1016.57px;font-size:14.8px;color:#000;transform:scaleX(0.9439);">of 1</div>
<div class="a" style="left:724px;top:406px;width:791px;height:590px;background:#fafafa;border:1px solid #b8b8b8;box-shadow:0 0 4px rgba(0,0,0,0.12)"></div>
<div class="a" style="left:724px;top:406px;width:791px;height:47.7px;background:#5b5b5b"></div>
<svg style="left:741px;top:419px" width="19" height="22" viewBox="0 0 19 22">
<polygon points="9.5,0 19,5.5 9.5,11 0,5.5" fill="#0f78b0"/><polygon points="0,5.5 9.5,11 0,16.5" fill="#2e9ad0"/><polygon points="19,5.5 9.5,11 19,16.5" fill="#7fd4f8"/>
<polygon points="0,16.5 9.5,11 9.5,22" fill="#f08a25"/><polygon points="19,16.5 9.5,11 9.5,22" fill="#e8553a"/></svg>
<div class="t" style="left:790.90px;top:431.29px;font-size:15.6px;color:#cfcfcf;transform:scaleX(1.0041);">RS Production</div>
<div class="t" style="left:1198.00px;top:431.29px;font-size:15.6px;color:#bdbdbd;transform:scaleX(1.0533);">Observation action</div>
<div class="a" style="left:1389px;top:431px;width:10px;height:2px;background:#dcdcdc"></div>
<div class="a" style="left:1437px;top:425px;width:10px;height:10px;border:1px solid #dcdcdc;border-top-width:2px"></div>
<svg style="left:1485px;top:425px" width="11" height="11" viewBox="0 0 11 11"><path d="M0.8 0.8L10.2 10.2M10.2 0.8L0.8 10.2" stroke="#dcdcdc" stroke-width="2"/></svg>
<svg style="left:726px;top:458px" width="24" height="26" viewBox="0 0 24 26">
<path d="M1.5 0.3H21.5Q22.7 0.3 22.7 1.5V21.8Q22.7 23 21.5 23H1.5Q0.3 23 0.3 21.8V1.5Q0.3 0.3 1.5 0.3Z" fill="#555"/><rect x="2.7" y="1.8" width="17.5" height="8.6" fill="#fafafa"/><rect x="2.7" y="10.4" width="17.5" height="3.6" fill="#2a96cc"/><rect x="5.5" y="16" width="9" height="7" fill="#ddd"/><rect x="8" y="16.5" width="3" height="6.5" fill="#333"/>
<circle cx="18" cy="18" r="6.5" fill="#fafafa" stroke="#e82028" stroke-width="2"/><path d="M15.6 15.6L20.4 20.4M20.4 15.6L15.6 20.4" stroke="#e82028" stroke-width="1.7"/></svg>
<svg style="left:740px;top:450px;mix-blend-mode:multiply" width="130" height="40" viewBox="740 450 130 40"><path d="M749 459L761 459.7L792.5 462.5L862 465L862 476.4L824 478L800 481L789 485.5L785 485.5L785 479.5L764.4 479L764 472L749 471Z" fill="#fff000"/></svg>
<div class="t" style="left:757.50px;top:470.48px;font-size:14.5px;color:#000;transform:scaleX(0.9057);">Save and close</div>
<svg style="left:860px;top:455px" width="35" height="31" viewBox="860 455 35 31"><g fill="none" stroke-linecap="round">
<g transform="rotate(-45 877.25 469.55)"><rect x="866.6" y="465.35" width="21.3" height="8.4" rx="4.2" stroke="#111" stroke-width="1.7"/></g>
<path d="M866.5 460.6L886.4 480.2" stroke="#fafafa" stroke-width="4.2"/><path d="M866.5 460.6L886.4 480.2" stroke="#111" stroke-width="1.7"/></g></svg>
<div class="t" style="left:896.30px;top:470.48px;font-size:14.5px;color:#000;transform:scaleX(0.9388);">Disconnect and close</div>
<div class="a" style="left:725px;top:486px;width:788px;height:1px;background:#c8c8c8"></div>
<div class="a" style="left:725px;top:487px;width:773px;height:492px;overflow:hidden">
<div class="a" style="left:767px;top:0;width:1px;height:492px;background:#d4d4d4"></div>
<div class="a" style="left:0;top:44px;width:773px;height:1px;background:#dcdcdc"></div>
<div class="t" style="left:33.00px;top:27.41px;font-size:14.7px;color:#000;transform:scaleX(0.9300);">DataserieObservation status changed</div>
<div class="a" style="left:31px;top:39px;width:696px;height:1px;background:#a8a8b4"></div>
<div class="a" style="left:737px;top:14px;width:26px;height:25px;background:#fbfbfb;border-radius:2px;box-shadow:0 1px 2px rgba(0,0,0,0.22)"></div>
<svg style="left:747px;top:25px" width="6" height="5" viewBox="0 0 6 5"><path d="M0 0H6L3 4.5Z" fill="#777"/></svg>
<div class="a" style="left:0;top:80px;width:773px;height:1px;background:#dcdcdc"></div>
<div class="t" style="left:33.00px;top:63.41px;font-size:14.7px;color:#000;transform:scaleX(0.9300);">Hour changed</div>
<div class="a" style="left:31px;top:75px;width:696px;height:1px;background:#a8a8b4"></div>
<div class="a" style="left:737px;top:50px;width:26px;height:25px;background:#fbfbfb;border-radius:2px;box-shadow:0 1px 2px rgba(0,0,0,0.22)"></div>
<svg style="left:747px;top:61px" width="6" height="5" viewBox="0 0 6 5"><path d="M0 0H6L3 4.5Z" fill="#777"/></svg>
<div class="a" style="left:0;top:116px;width:773px;height:1px;background:#dcdcdc"></div>
<div class="t" style="left:33.00px;top:99.41px;font-size:14.7px;color:#000;transform:scaleX(0.9300);">Measuring point entered stop status</div>
<div class="a" style="left:31px;top:111px;width:696px;height:1px;background:#a8a8b4"></div>
<div class="a" style="left:737px;top:86px;width:26px;height:25px;background:#fbfbfb;border-radius:2px;box-shadow:0 1px 2px rgba(0,0,0,0.22)"></div>
<svg style="left:747px;top:97px" width="6" height="5" viewBox="0 0 6 5"><path d="M0 0H6L3 4.5Z" fill="#777"/></svg>
<div class="a" style="left:0;top:152px;width:773px;height:1px;background:#dcdcdc"></div>
<div class="t" style="left:33.00px;top:135.41px;font-size:14.7px;color:#000;transform:scaleX(0.9300);">Measuring point has changed status to producing</div>
<div class="a" style="left:31px;top:147px;width:696px;height:1px;background:#a8a8b4"></div>
<div class="a" style="left:737px;top:122px;width:26px;height:25px;background:#fbfbfb;border-radius:2px;box-shadow:0 1px 2px rgba(0,0,0,0.22)"></div>
<svg style="left:747px;top:133px" width="6" height="5" viewBox="0 0 6 5"><path d="M0 0H6L3 4.5Z" fill="#777"/></svg>
<div class="a" style="left:0;top:188px;width:773px;height:1px;background:#dcdcdc"></div>
<div class="t" style="left:33.00px;top:171.41px;font-size:14.7px;color:#000;transform:scaleX(0.9300);">Measuring point has changed status to setup</div>
<div class="a" style="left:31px;top:183px;width:696px;height:1px;background:#a8a8b4"></div>
<div class="a" style="left:737px;top:158px;width:26px;height:25px;background:#fbfbfb;border-radius:2px;box-shadow:0 1px 2px rgba(0,0,0,0.22)"></div>
<svg style="left:747px;top:169px" width="6" height="5" viewBox="0 0 6 5"><path d="M0 0H6L3 4.5Z" fill="#777"/></svg>
<div class="a" style="left:0;top:224px;width:773px;height:1px;background:#dcdcdc"></div>
<div class="t" style="left:33.00px;top:207.41px;font-size:14.7px;color:#000;transform:scaleX(0.9300);">Measuring point has finished setup</div>
<div class="a" style="left:31px;top:219px;width:696px;height:1px;background:#a8a8b4"></div>
<div class="a" style="left:737px;top:194px;width:26px;height:25px;background:#fbfbfb;border-radius:2px;box-shadow:0 1px 2px rgba(0,0,0,0.22)"></div>
<svg style="left:747px;top:205px" width="6" height="5" viewBox="0 0 6 5"><path d="M0 0H6L3 4.5Z" fill="#777"/></svg>
<svg style="left:10px;top:202px" width="6" height="10" viewBox="0 0 6 10"><path d="M1 1L5 5L1 9" fill="none" stroke="#666" stroke-width="1.1"/></svg>
<div class="a" style="left:0;top:260px;width:773px;height:1px;background:#dcdcdc"></div>
<div class="t" style="left:33.00px;top:243.41px;font-size:14.7px;color:#000;transform:scaleX(0.9300);">Measuring point has produced units</div>
<div class="a" style="left:31px;top:255px;width:696px;height:1px;background:#a8a8b4"></div>
<div class="a" style="left:737px;top:230px;width:26px;height:25px;background:#fbfbfb;border-radius:2px;box-shadow:0 1px 2px rgba(0,0,0,0.22)"></div>
<svg style="left:747px;top:241px" width="6" height="5" viewBox="0 0 6 5"><path d="M0 0H6L3 4.5Z" fill="#777"/></svg>
<div class="a" style="left:0;top:296px;width:773px;height:1px;background:#dcdcdc"></div>
<div class="t" style="left:33.00px;top:279.41px;font-size:14.7px;color:#000;transform:scaleX(0.9300);">Measuring point has reworked units</div>
<div class="a" style="left:31px;top:291px;width:696px;height:1px;background:#a8a8b4"></div>
<div class="a" style="left:737px;top:266px;width:26px;height:25px;background:#fbfbfb;border-radius:2px;box-shadow:0 1px 2px rgba(0,0,0,0.22)"></div>
<svg style="left:747px;top:277px" width="6" height="5" viewBox="0 0 6 5"><path d="M0 0H6L3 4.5Z" fill="#777"/></svg>
<div class="a" style="left:0;top:332px;width:773px;height:1px;background:#dcdcdc"></div>
<div class="t" style="left:33.00px;top:315.41px;font-size:14.7px;color:#000;transform:scaleX(0.9300);">Measuring point has scrapped units</div>
<div class="a" style="left:31px;top:327px;width:696px;height:1px;background:#a8a8b4"></div>
<div class="a" style="left:737px;top:302px;width:26px;height:25px;background:#fbfbfb;border-radius:2px;box-shadow:0 1px 2px rgba(0,0,0,0.22)"></div>
<svg style="left:747px;top:313px" width="6" height="5" viewBox="0 0 6 5"><path d="M0 0H6L3 4.5Z" fill="#777"/></svg>
<div class="a" style="left:0;top:368px;width:773px;height:1px;background:#dcdcdc"></div>
<div class="t" style="left:33.00px;top:351.41px;font-size:14.7px;color:#000;transform:scaleX(0.9300);">Measuring point status (20s)</div>
<div class="a" style="left:31px;top:363px;width:696px;height:1px;background:#a8a8b4"></div>
<div class="a" style="left:737px;top:338px;width:26px;height:25px;background:#fbfbfb;border-radius:2px;box-shadow:0 1px 2px rgba(0,0,0,0.22)"></div>
<svg style="left:747px;top:349px" width="6" height="5" viewBox="0 0 6 5"><path d="M0 0H6L3 4.5Z" fill="#777"/></svg>
<div class="a" style="left:26px;top:369px;width:747px;height:36px;background:#bdbdbd"></div>
<div class="a" style="left:0;top:404px;width:773px;height:1px;background:#dcdcdc"></div>
<div class="t" style="left:33.00px;top:387.41px;font-size:14.7px;color:#000;transform:scaleX(0.9300);">Minute changed</div>
<div class="a" style="left:31px;top:399px;width:696px;height:1px;background:#a0a0a8"></div>
<div class="a" style="left:737px;top:374px;width:26px;height:25px;background:#fff;border-radius:2px;box-shadow:0 1px 2px rgba(0,0,0,0.22)"></div>
<svg style="left:747px;top:385px" width="6" height="5" viewBox="0 0 6 5"><path d="M0 0H6L3 4.5Z" fill="#777"/></svg>
<div class="a" style="left:26px;top:369px;width:742px;height:36px;border:1px solid #f07048"></div>
<div class="a" style="left:0;top:440px;width:773px;height:1px;background:#dcdcdc"></div>
<div class="t" style="left:33.00px;top:423.41px;font-size:14.7px;color:#000;transform:scaleX(0.9300);">New shift started on measuring point</div>
<div class="a" style="left:31px;top:435px;width:696px;height:1px;background:#a8a8b4"></div>
<div class="a" style="left:737px;top:410px;width:26px;height:25px;background:#fbfbfb;border-radius:2px;box-shadow:0 1px 2px rgba(0,0,0,0.22)"></div>
<svg style="left:747px;top:421px" width="6" height="5" viewBox="0 0 6 5"><path d="M0 0H6L3 4.5Z" fill="#777"/></svg>
<div class="a" style="left:0;top:476px;width:773px;height:1px;background:#dcdcdc"></div>
<div class="t" style="left:33.00px;top:459.41px;font-size:14.7px;color:#000;transform:scaleX(0.9300);">OperatorLoggedIn</div>
<div class="a" style="left:31px;top:471px;width:696px;height:1px;background:#a8a8b4"></div>
<div class="a" style="left:737px;top:446px;width:26px;height:25px;background:#fbfbfb;border-radius:2px;box-shadow:0 1px 2px rgba(0,0,0,0.22)"></div>
<svg style="left:747px;top:457px" width="6" height="5" viewBox="0 0 6 5"><path d="M0 0H6L3 4.5Z" fill="#777"/></svg>
<div class="a" style="left:0;top:512px;width:773px;height:1px;background:#dcdcdc"></div>
<div class="t" style="left:33.00px;top:495.41px;font-size:14.7px;color:#000;transform:scaleX(0.9300);">OperatorLoggedOut</div>
<div class="a" style="left:31px;top:507px;width:696px;height:1px;background:#a8a8b4"></div>
<div class="a" style="left:737px;top:482px;width:26px;height:25px;background:#fbfbfb;border-radius:2px;box-shadow:0 1px 2px rgba(0,0,0,0.22)"></div>
<svg style="left:747px;top:493px" width="6" height="5" viewBox="0 0 6 5"><path d="M0 0H6L3 4.5Z" fill="#777"/></svg>
<div class="a" style="left:26px;top:0;width:1px;height:492px;background:#f07048"></div>
<div class="a" style="left:0;top:0;width:26px;height:29px;background:#f0f0f0"></div>
<div class="a" style="left:27px;top:0;width:741px;height:29px;background:#bdbdbd"></div>
<div class="a" style="left:26px;top:0;width:1px;height:29px;background:#f07048"></div>
<div class="t" style="left:31.70px;top:15.12px;font-size:13.5px;color:#222;transform:scaleX(0.8225);">*TRANSLATEDNAME</div>
<svg style="left:739px;top:12px" width="7" height="4" viewBox="0 0 7 4"><path d="M0 4L3.5 0L7 4Z" fill="#111"/></svg>
<svg style="left:752px;top:10px" width="11" height="11" viewBox="0 0 11 11"><path d="M0 0H11L6.8 5V11L4.2 9.5V5Z" fill="#7a7a7a"/></svg>
</div>
<div class="a" style="left:1498px;top:487px;width:15px;height:492px;background:#f4f4f4"></div>
<div class="a" style="left:1500px;top:616px;width:13px;height:221px;background:#d9d9d9"></div>
<svg style="left:1502px;top:490px" width="8" height="6" viewBox="0 0 8 6"><path d="M0 6L4 0L8 6Z" fill="#222"/></svg>
<svg style="left:1502px;top:968px" width="8" height="6" viewBox="0 0 8 6"><path d="M0 0L8 0L4 6Z" fill="#222"/></svg>
<div class="a" style="left:725px;top:979px;width:773px;height:16px;background:#f4f4f4"></div>
<div class="a" style="left:741px;top:981px;width:608px;height:12px;background:#dcdcdc"></div>
<svg style="left:730px;top:983px" width="6" height="8" viewBox="0 0 6 8"><path d="M6 0V8L0 4Z" fill="#222"/></svg>
<svg style="left:1487px;top:983px" width="6" height="8" viewBox="0 0 6 8"><path d="M0 0V8L6 4Z" fill="#222"/></svg>
<div class="a" style="left:1498px;top:979px;width:15px;height:16px;background:#fff"></div>
<svg style="left:515px;top:135px;mix-blend-mode:multiply" width="70" height="35" viewBox="515 135 70 35"><path d="M524 142.8L545.4 144.1L576.8 145.8L576.8 157.5L565.6 159.3L550.4 161.8L544.4 162.8L543.6 155.6L524 154.8Z" fill="#fff000"/></svg>
<svg style="left:745px;top:315px;mix-blend-mode:multiply" width="30" height="45" viewBox="745 315 30 45"><path d="M752 322Q752 320.8 754 320.8L761.7 320.8Q766.4 322 766.4 327L766.4 342L761.7 346L758.2 352.2Q757 353.4 754 353.4L752 353.4Z" fill="#fff000"/></svg>
<svg style="left:715px;top:850px;mix-blend-mode:multiply" width="150" height="45" viewBox="715 850 150 45"><path d="M721 872Q722 869 740 865.5Q760 859 790 858L835 858Q852 860 860.9 870Q862 878 850 883Q830 886.5 790 886L725 885.8Q720.5 885.5 721 880Z" fill="#fff000"/></svg>
</div></div></body></html>
